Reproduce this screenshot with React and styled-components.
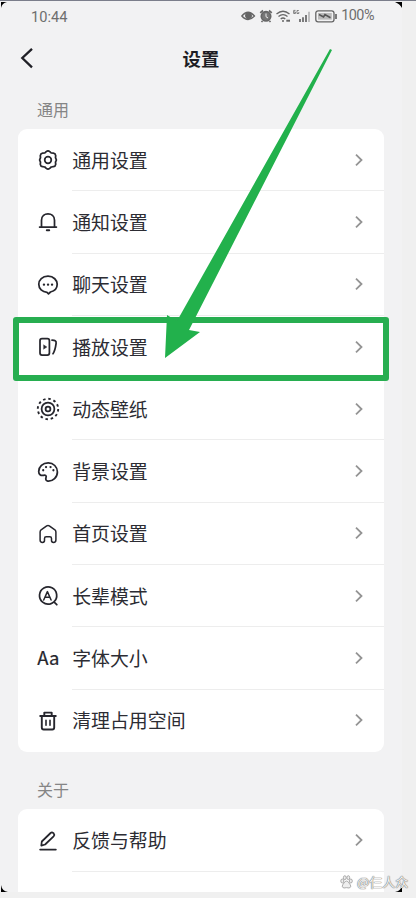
import React from 'react';
import styled, { createGlobalStyle, css } from 'styled-components';

const Global = createGlobalStyle`
  * { box-sizing: border-box; }
  html, body { margin: 0; padding: 0; background: #f0f0f0; }
  body { overflow: hidden; font-family: "Noto Sans", "Noto Sans CJK SC", sans-serif; }
`;

const Page = styled.div`
  position: relative;
  width: 416px;
  height: 898px;
  overflow: hidden;
  background: #f0f0f0;
  border-top: 1px solid #7b7e8b;
`;

const Screen = styled.main`
  width: 402px;
  height: 891px;
  overflow: hidden;
  background: #f2f2f3;
`;

const StatusBar = styled.div`
  display: flex;
  align-items: center;
  justify-content: space-between;
  height: 30px;
  padding: 0 28px 0 31px;
  font: 400 14px/30px Roboto, sans-serif;
  color: #6e6e6e;
`;

const Clock = styled.span`
  font-size: 14.6px;
  line-height: 28px;
  padding-top: 2px;
`;

const Indicators = styled.div`
  display: flex;
  align-items: center;
`;

const StatusIcons = styled.svg`
  display: block;
  width: 100px;
  height: 18px;
`;

const Percent = styled.span`
  font-size: 14.4px;
  letter-spacing: -0.5px;
  white-space: nowrap;
`;

const Header = styled.header`
  display: grid;
  grid-template-columns: 40px 1fr 40px;
  align-items: center;
  height: 54px;
`;

const BackIcon = styled.svg`
  width: 40px;
  height: 40px;
`;

const Title = styled.h1`
  margin: 0;
  text-align: center;
  font: 700 18.4px/28px "Noto Sans CJK SC", sans-serif;
  color: #1d1d24;
`;

const SectionLabel = styled.h2`
  margin: 0;
  height: ${p => p.$height}px;
  padding: ${p => p.$top}px 0 0 37px;
  font: 400 16px/24px "Noto Sans CJK SC", sans-serif;
  color: #858585;
`;

const Card = styled.section`
  width: 366px;
  margin-left: 18px;
  background: #fff;
  border-radius: 9px;
  overflow: hidden;
  ${p => p.$cut && css`border-radius: 9px 9px 0 0; height: 83px;`}
`;

const Row = styled.div`
  display: flex;
  align-items: center;
  height: 62.3px;
  padding-left: 17.6px;
`;

const RowIcon = styled.svg`
  flex: none;
  width: 24px;
  height: 24px;
  margin-right: 12.6px;
  overflow: visible;
  fill: none;
  stroke: #26262d;
  stroke-width: 1.75;
  stroke-linecap: round;
  stroke-linejoin: round;
`;

const RowBody = styled.div`
  flex: 1;
  display: flex;
  align-items: center;
  justify-content: space-between;
  height: 100%;
  padding-right: 19px;
  border-bottom: 1px solid ${p => (p.$last ? 'transparent' : '#ededed')};
`;

const Label = styled.span`
  font: 400 18.9px/28px "Noto Sans CJK SC", sans-serif;
  color: #2c2c33;
`;

const Chevron = styled.svg`
  width: 12px;
  height: 16px;
  fill: none;
  stroke: #949494;
  stroke-width: 1.8;
`;

const Corner = styled.svg`
  position: absolute;
  width: 7px;
  height: 7px;
  left: ${p => p.$x}px;
  top: ${p => p.$y}px;
`;

const Highlight = styled.div`
  position: absolute;
  left: 13px;
  top: 316px;
  width: 376px;
  height: 64px;
  border: 6px solid #27ae50;
  border-radius: 3px;
`;

const Arrow = styled.svg`
  position: absolute;
  left: 160px;
  top: 44px;
  width: 180px;
  height: 320px;
  fill: #22b14c;
`;

const Watermark = styled.div`
  position: absolute;
  left: 340px;
  top: 872px;
  display: flex;
  align-items: center;
  gap: 4px;
  font: 400 13px/18px "Noto Sans CJK SC", sans-serif;
  color: #f4f4f4;
  white-space: nowrap;
  text-shadow: 0 0 1px #777, 0 0 1px #888, 0 0 1px #888;
`;

const Paw = styled.svg`
  width: 13px;
  height: 14px;
  fill: #eee;
  stroke: #999;
  stroke-width: 0.8;
`;

const IconText = styled.text`
  font: 400 ${p => p.$size}px "Noto Sans CJK SC", sans-serif;
  fill: #26262d;
  stroke: #26262d;
  stroke-width: 0.2;
  text-anchor: middle;
`;

const icons = {
  gear: (
    <>
      <path d="M10.2 3.6Q12 2.2 13.8 3.6L15.2 5L17.4 5.2Q19.5 5.6 19.7 7.7L19.5 9.6L20.4 12L19.5 14.2L19.7 16.3Q19.4 18.4 17.3 18.7L15.2 19L13.7 20.4Q12 21.7 10.3 20.4L8.8 19L6.7 18.7Q4.6 18.4 4.3 16.3L4.5 14.2L3.6 12L4.5 9.6L4.3 7.7Q4.6 5.5 6.6 5.2L8.8 5Z" />
      <circle cx="12" cy="12" r="3.3" />
    </>
  ),
  bell: (
    <>
      <path d="M3.6 17H20.4M5.5 17V10.3C5.5 1.8 18.5 1.8 18.5 10.3V17" />
      <path d="M10.8 20.3H13.2" strokeWidth="2" />
    </>
  ),
  chat: (
    <>
      <path d="M12 3.2C6.3 3.2 2.8 6.7 2.8 11.3S6.3 19 11 19.3L12.5 20.8L14.5 19C18.7 18 21.2 15.3 21.2 11.3S17.7 3.2 12 3.2Z" />
      <path d="M7.9 11.7H8M12 11.7H12.1M16 11.7H16.1" strokeWidth="2.3" />
    </>
  ),
  play: (
    <>
      <rect x="4" y="3.7" width="9.4" height="16.3" rx="2" />
      <path d="M7.8 10L10.8 12L7.8 14Z" fill="#26262d" strokeWidth="0.5" />
      <path d="M16 5.1C18.5 5.4 20.5 5.6 20.1 8.3C19.6 12 18.8 16 17 18.7" />
    </>
  ),
  wallpaper: (
    <>
      <circle cx="12" cy="12" r="10.2" strokeDasharray="2.5 2.84" strokeWidth="1.9" strokeLinecap="butt" />
      <circle cx="12" cy="12" r="6.4" />
      <circle cx="12" cy="12" r="2.4" strokeWidth="1.8" />
    </>
  ),
  palette: (
    <>
      <path d="M11.8 21.1C17 21.5 21.4 17.3 21.4 12C21.4 6.8 17.4 2.9 12.2 2.9C6.8 2.9 2.7 6.6 2.7 11.4C2.7 14.5 4.8 15.8 7.4 15.3C9.7 14.8 10.7 15.8 10 17.6C9.4 19.4 9.9 20.6 11.8 21.1Z" />
      <path d="M7.2 10.2V10.3M10 7.1H10.1M14.5 7.1H14.6M17.4 10.2V10.3" strokeWidth="2.2" />
    </>
  ),
  home: (
    <path strokeWidth="1.5" d="M4.1 10.1Q4.1 8.7 5.1 7.8L10.7 3.8Q12 3 13.3 3.8L18.9 7.8Q19.9 8.7 19.9 10.1V18Q19.9 20.4 17.6 20.4Q15.5 20.4 15.5 18.5V16.5Q15.5 14.8 13.8 14.8H10.2Q8.5 14.8 8.5 16.5V18.5Q8.5 20.4 6.4 20.4Q4.1 20.4 4.1 18Z" />
  ),
  elder: (
    <>
      <path d="M17.9 17.9A8.6 8.6 0 1 0 14.5 19.8M17.9 17.9L20.8 20.7M14.5 19.8Q16.5 19.2 17.9 17.9" />
      <path d="M7.7 16L11.4 7.6L15.1 16M9.2 13.3H13.6" strokeWidth="1.5" />
    </>
  ),
  font: <IconText x="12.3" y="18" $size={18.5}>Aa</IconText>,
  trash: (
    <g strokeWidth="1.9">
      <path d="M4.2 7H19.8M8.3 6.6V3.6H15.7V6.6M5.8 7.5V18.6Q5.8 20.5 7.7 20.5H16.3Q18.2 20.5 18.2 18.6V7.5" />
      <path d="M10 11.3V16.3M14 11.3V16.3" strokeWidth="1.6" />
    </g>
  ),
  pen: (
    <>
      <path d="M5.3 16.6L5.8 12.5L14.6 4Q16 2.8 17.4 4.1L17.8 4.6Q19 6 17.6 7.4L9.1 15.5Z" />
      <path d="M4.2 20.6H19.8" strokeWidth="1.9" />
    </>
  ),
};

const general = [
  ['gear', '通用设置'],
  ['bell', '通知设置'],
  ['chat', '聊天设置'],
  ['play', '播放设置'],
  ['wallpaper', '动态壁纸'],
  ['palette', '背景设置'],
  ['home', '首页设置'],
  ['elder', '长辈模式'],
  ['font', '字体大小'],
  ['trash', '清理占用空间'],
];

function SettingRow({ icon, label, last }) {
  return (
    <Row>
      <RowIcon viewBox="0 0 24 24">{icons[icon]}</RowIcon>
      <RowBody $last={last}>
        <Label>{label}</Label>
        <Chevron viewBox="0 0 12 16"><path d="M3 2.7L8.5 8L3 13.3" /></Chevron>
      </RowBody>
    </Row>
  );
}

function StatusGlyphs() {
  return (
    <StatusIcons viewBox="0 0 100 18" fill="none" stroke="#666" strokeWidth="1.3">
      <path d="M.8 9Q7 1.5 13.5 9Q7 16 .8 9Z" />
      <circle cx="7.5" cy="8.8" r="2.8" fill="#666" />
      <circle cx="25" cy="9.3" r="4.7" fill="#777" strokeWidth="1.7" />
      <path d="M19.2 5.8L22 3.5M28 3.5L30.8 5.8M21.5 14L20.5 15M28.5 14L29.5 15" strokeWidth="1.7" />
      <path d="M25 6.5V9.7L27 11" stroke="#eee" strokeWidth="1" />
      <path d="M35.5 7Q42 1.5 48.5 7M37.5 9.5Q42 5.7 46.5 9.5M39.7 12Q42 10 44.3 12" />
      <circle cx="42" cy="14" r="1" fill="#666" stroke="none" />
      <path d="M45.3 13.7H49" strokeWidth="2" />
      <path d="M54.5 3.4H52.7V6.5H54.4V5H52.7M57.8 3.5H56V6.5H57.8V5" strokeWidth=".8" />
      <path d="M59 15V12M62 15V10.2M65 15V8" strokeWidth="1.7" />
      <path d="M68 15V4.8" stroke="#aaa" strokeWidth="1.4" />
      <rect x="74.8" y="3.8" width="18.2" height="11" rx="2.3" />
      <rect x="77" y="6" width="13.8" height="6.6" fill="#bbb" stroke="none" />
      <path d="M78 7.5L82.5 10L84 7.5L89.5 10.7" stroke="#555" strokeWidth="1.6" />
      <path d="M95 7V12" strokeWidth="1.7" />
    </StatusIcons>
  );
}

export default function App() {
  return (
    <>
      <Global />
      <Page>
        <Screen>
          <StatusBar>
            <Clock>10:44</Clock>
            <Indicators>
              <StatusGlyphs />
              <Percent>100%</Percent>
            </Indicators>
          </StatusBar>
          <Header>
            <BackIcon viewBox="0 0 40 40" fill="none" stroke="#202026" strokeWidth="2.3">
              <path d="M32 10.8L22.3 20L32 29.3" />
            </BackIcon>
            <Title>设置</Title>
          </Header>
          <SectionLabel $height={44} $top={12}>通用</SectionLabel>
          <Card>
            {general.map(([icon, label], i) => (
              <SettingRow key={icon} icon={icon} label={label} last={i === general.length - 1} />
            ))}
          </Card>
          <SectionLabel $height={57.5} $top={25}>关于</SectionLabel>
          <Card $cut>
            <SettingRow icon="pen" label="反馈与帮助" />
          </Card>
        </Screen>
        <Corner $x={1} $y={1} viewBox="0 0 7 7"><path d="M0 0H6Q1 1 0 6Z" /></Corner>
        <Corner $x={395} $y={1} viewBox="0 0 7 7"><path d="M0 0H7V6Q5 2 0 0Z" /></Corner>
        <Corner $x={1} $y={884} viewBox="0 0 7 7"><path d="M0 0Q1 6 7 7H0Z" /></Corner>
        <Corner $x={395} $y={884} viewBox="0 0 7 7"><path d="M7 0Q6 6 0 7H7Z" /></Corner>
        <Highlight />
        <Arrow viewBox="160 45 180 320">
          <path d="M330 49L332 50L189 330L200 332L165 358L167 315L177 321Z" />
        </Arrow>
        <Watermark>
          <Paw viewBox="0 0 13 14">
            <ellipse cx="2.3" cy="6" rx="1.5" ry="2" />
            <ellipse cx="4.8" cy="2.7" rx="1.4" ry="2" />
            <ellipse cx="8.3" cy="2.7" rx="1.4" ry="2" />
            <ellipse cx="10.8" cy="6" rx="1.5" ry="2" />
            <path d="M6.5 6Q8 6 9 8Q12.5 12 9 13Q6.5 12.3 4 13Q.5 12 4 8Q5 6 6.5 6Z" />
          </Paw>
          <span>@仨人众</span>
        </Watermark>
      </Page>
    </>
  );
}
